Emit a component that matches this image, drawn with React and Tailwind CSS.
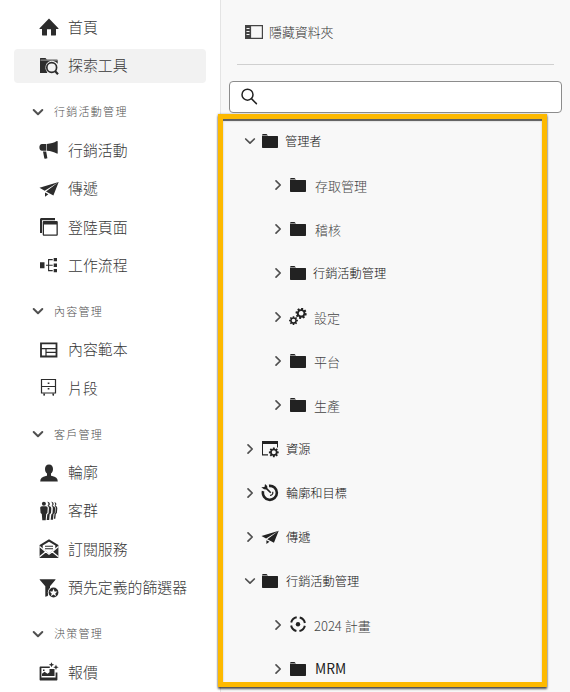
import React from "react";

const Svg = ({ s = 20, children, className = "" }) => (
  <svg width={s} height={s} viewBox={`0 0 ${s} ${s}`} fill="currentColor" className={`shrink-0 ${className}`}>
    {children}
  </svg>
);

const Home = () => (
  <Svg><path d="M10 1.6 19.4 11.2c.3.4.1.8-.3.8H17v6c0 .3-.2.5-.5.5H12V12.3H8v6.2H3.500c-.3 0-.5-.2-.5-.5v-6H.900c-.4 0-.6-.4-.3-.8Z" /></Svg>
);

const Explore = () => (
  <Svg>
    <path d="M1 17V2.500c0-.3.2-.5.500-.5h5l1.300 1.500H18c.4 0 .7.300.7.700v3.600A6.300 6.300 0 0 0 7.500 15l.8 2Z" />
    <path d="M1.500 4.100h17" stroke="#f2f2f2" strokeWidth=".6" />
    <circle cx="12.700" cy="11.500" r="4.900" fill="#f2f2f2" stroke="currentColor" strokeWidth="1.700" />
    <path d="m16 15 3 3.200" stroke="currentColor" strokeWidth="2.200" />
  </Svg>
);

const Megaphone = () => (
  <Svg>
    <path d="M3 4h4.300v6.700H3C1.300 10.700.4 9.300.4 7.300S1.300 4 3 4ZM7.900 4c4-.2 7-1.200 9.900-2.900.4-.3.9 0 .9.400v11.700c0 .4-.5.700-.9.400C15 11.900 12 10.900 7.900 10.700ZM4 11.600h3.200l1.200 6.700-2.300.5c-.5.1-.7-.2-.8-.5Z" />
  </Svg>
);

const Plane = ({ s = 20 }) => (
  <svg width={s} height={s} viewBox="0 0 20 20" fill="currentColor" className="shrink-0">
    <path d="M19.700 3 .5 8.800l5.200 2.900ZM19.700 3 7 12.500l7.400 4ZM6 13.500v4.300l3.400-2.500Z" />
  </svg>
);

const Pages = () => (
  <Svg>
    <path d="M1 16V2.500C1 1.600 1.600 1 2.500 1H16v2.200H3V16Z" />
    <path fillRule="evenodd" d="M5 4h12.500c.8 0 1.300.5 1.300 1.300v12.200c0 .8-.5 1.300-1.300 1.300H5c-.8 0-1.300-.5-1.300-1.300V5.300C3.700 4.500 4.200 4 5 4Zm0 3.500v10h12.500v-10Z" />
  </Svg>
);

const Workflow = () => (
  <Svg>
    <path d="M1 7.200h4.500v6H1ZM14.700 3H18v3.300h-3.300ZM14.700 8.600H18v3.300h-3.300ZM14.700 14H18v3.300h-3.300Z" />
    <path d="M7 10.200h6.700M13.700 4.600H9.600v11h4.100" fill="none" stroke="currentColor" strokeWidth="1.100" />
  </Svg>
);

const Template = () => (
  <Svg>
    <path d="M2 3.300h15.500v13.200H2Z" fill="none" stroke="currentColor" strokeWidth="1.800" />
    <path d="M2 8.700h15.500M7 9v7.500M7.500 12.400h10" fill="none" stroke="currentColor" strokeWidth="1.200" />
  </Svg>
);

const Drawer = () => (
  <Svg>
    <path d="M2.500 1.500h14v13.500h-14ZM2.500 8.500h14" fill="none" stroke="currentColor" strokeWidth="1.200" />
    <path d="M8.700 4.400h1.700v1.700H8.700ZM8.700 9.900h1.700v1.700H8.700ZM4.200 15.500h2l-.5 2.200H4.500ZM13.200 15.500h2l-.3 2.200h-1.200Z" />
  </Svg>
);

const Person = () => (
  <Svg><path d="M10 1.400c2.600 0 4 1.900 4 4.500 0 2-.8 3.700-2 4.700v1.300c0 .7.4 1 1.100 1.200 3.700.8 5.600 2.200 5.700 5.300H1.200c.1-3.100 2-4.500 5.700-5.300.7-.2 1.100-.5 1.100-1.200v-1.300c-1.200-1-2-2.700-2-4.700 0-2.600 1.400-4.500 4-4.500Z" /></Svg>
);

const People = () => (
  <Svg>
    <circle cx="4.900" cy="2.700" r="2" />
    <path d="M3 5.300h3.800c1.100 0 1.900.7 1.900 1.800l-.3 5-1.200.8-.5 6.300H3.300l-.5-6.300-1.200-.8-.4-5c0-1.100.7-1.800 1.800-1.800Z" />
    <path d="M8.200.8c3.200-.2 3.300 3.500 1.100 4.100 2.200.2 3 1.200 3 2.500l-.3 4.800-1.300.9-.5 6H7.700l.6-5.700 1.300-1.100.3-5.300c0-1-.6-1.600-1.500-2 1.500-1.100 1.300-3.100-.2-4.200Z" />
    <path d="M12 .8c3.200-.2 3.300 3.500 1.100 4.100 2.200.2 3 1.200 3 2.500l-.3 4.800-1.300.9-.5 5.700h-2.300l.6-5.400 1.200-1.100.3-5.300c0-1-.5-1.600-1.300-2 1.300-1.100 1.100-3.100-.5-4.200Z" />
    <path d="M15.300 1.200c2.400 0 2.700 2.800.9 3.500 1.500.3 2.100 1.300 2.100 2.500l-.4 4.800-1.100.9-.5 4.900h-1.400l.6-5 .9-1.100.3-4.800c0-.9-.5-1.600-1.200-2 1-1 .9-2.700-.2-3.700Z" />
  </Svg>
);

const MailOpen = () => (
  <Svg>
    <path d="M10 .3 19.400 6v12.200c0 .4-.2.700-.7.700H1.300c-.5 0-.7-.3-.7-.7V6Z" />
    <path d="m10 2.800 6.300 3.700v3.200L10 14.400 3.700 9.700V6.500Z" fill="#fff" />
    <path d="m.6 7.500 6.200 5.200-6.200 5M19.400 7.500l-6.200 5.200 6.200 5M6.800 12.700 10 15.300l3.200-2.600" fill="none" stroke="#fff" strokeWidth="1.200" />
    <path d="M6 7.200h8M6 9.800h8" stroke="currentColor" strokeWidth="1.100" />
  </Svg>
);

const Filter = () => (
  <Svg>
    <path d="M.9 1.300h15.400c.3 0 .4.300.2.500L11 8.300v3L8.700 18l-2.400.8V8.300L.7 1.800c-.2-.2-.1-.5.2-.5Z" />
    <circle cx="14.500" cy="14.500" r="5.700" fill="#fff" />
    <circle cx="14.500" cy="14.500" r="4.900" />
    <path d="m14.500 10.800 1.100 2.600 2.800.2-2.100 1.800.7 2.800-2.500-1.600-2.500 1.600.7-2.800-2.100-1.800 2.800-.2Z" fill="#fff" />
  </Svg>
);

const Offer = () => (
  <Svg>
    <path fillRule="evenodd" d="M1.600 4.500h9.200v1.600H2.400v9.300h14.200v-5h1.800v7c0 .7-.4 1.100-1.100 1.100H1.600c-.7 0-1-.4-1-1.100V5.500c0-.6.400-1 1-1ZM3 11.800l2.500-2 3 2 2-1.600V7h5v7H3Z" />
    <path d="M4 7.500h1.500V9H4Z" />
    <path d="m12.500.2.8 1.800 1.900.7-1.900.7-.8 1.800-.8-1.800-1.900-.7 1.900-.7ZM17 2.500l.7 2 2 .7-2 .8-.7 2-.8-2-2-.8 2-.7Z" />
  </Svg>
);

const Folder = () => (
  <svg width="18" height="17" viewBox="0 0 18 17" fill="currentColor" className="shrink-0">
    <path d="M1 2.500C1 1.600 1.500 1 2.200 1h3.300L7 2.500ZM1 3H16.500c.3 0 .5.200.5.500v10.800c0 .4-.3.700-.7.700H1.700c-.4 0-.7-.3-.7-.7Z" />
  </svg>
);

const cog = "M-1.200-6.500h2.400l.3 2 1 .4 1.600-1.200 1.700 1.700-1.200 1.600.4 1 2 .3v2.400l-2 .3-.4 1 1.200 1.600-1.700 1.700-1.600-1.200-1 .4-.3 2h-2.400l-.3-2-1-.4-1.600 1.200-1.700-1.700 1.200-1.600-.4-1-2-.3v-2.400l2-.3.4-1-1.200-1.600 1.700-1.700 1.600 1.200 1-.4ZM0-2.600a2.900 2.900 0 1 0 0 5.800 2.900 2.900 0 0 0 0-5.800Z";

const Gears = () => (
  <Svg s={18}>
    <g transform="translate(12.200 5) rotate(12) scale(.8)"><path fillRule="evenodd" d={cog} /></g>
    <g transform="translate(4.500 12.300) scale(.63)"><path fillRule="evenodd" d={cog} /></g>
  </Svg>
);

const WindowGear = () => (
  <Svg s={18}>
    <path fillRule="evenodd" d="M1 1h16v6.500h-1V4H2v10.300h5v1.100H1Z" />
    <g transform="translate(12.800 12) scale(.7)"><path fillRule="evenodd" d={cog} /></g>
  </Svg>
);

const Target = () => (
  <Svg s={18}>
    <path d="M8 1.900a7 7 0 1 1-5.900 5.200" fill="none" stroke="currentColor" strokeWidth="2.600" />
    <path d="M11.600 7.700a2.500 2.500 0 0 1-2.500 3.600" fill="none" stroke="currentColor" strokeWidth="1.200" />
    <path d="m4 0 2.200 1.900.2 2.300 3.900 4-1.100 1.100-4-3.900L3 5.300.3 3.300l3.200-.2Z" />
  </Svg>
);

const Plan = () => (
  <Svg s={18}>
    <circle cx="9" cy="8.200" r="7" fill="none" stroke="currentColor" strokeWidth="2" strokeDasharray="7.900 3.096" strokeDashoffset="-1.550" />
    <circle cx="9" cy="8.200" r="2.200" />
  </Svg>
);

const Chevron = ({ open, wide }) => (
  <svg width="12" height="12" viewBox="0 0 12 12" fill="none" stroke="#505050" strokeWidth={wide ? 2 : 1.7} strokeLinecap="round" strokeLinejoin="round" className="shrink-0">
    <path d={open ? "M1.700 4 6 8.200 10.300 4" : "m4 1.800 4.200 4.200L4 10.200"} />
  </svg>
);

const groups = [
  { items: [["首頁", Home], ["探索工具", Explore]] },
  { title: "行銷活動管理", items: [["行銷活動", Megaphone], ["傳遞", Plane], ["登陸頁面", Pages], ["工作流程", Workflow]] },
  { title: "內容管理", items: [["內容範本", Template], ["片段", Drawer]] },
  { title: "客戶管理", items: [["輪廓", Person], ["客群", People], ["訂閱服務", MailOpen], ["預先定義的篩選器", Filter]] },
  { title: "決策管理", items: [["報價", Offer]] },
];

const small = "text-[12.2px] text-[#111]";
const large = "text-[13px] text-[#444]";

const tree = [
  { label: "管理者", Icon: Folder, open: true, cls: small, pad: "ml-[6px]" },
  { label: "存取管理", Icon: Folder, child: true, cls: large, pad: "ml-[8px]" },
  { label: "稽核", Icon: Folder, child: true, cls: large, pad: "ml-[8px]" },
  { label: "行銷活動管理", Icon: Folder, child: true, cls: small, pad: "ml-[6px]" },
  { label: "設定", Icon: Gears, child: true, cls: large, pad: "ml-[7px]" },
  { label: "平台", Icon: Folder, child: true, cls: large, pad: "ml-[7px]" },
  { label: "生產", Icon: Folder, child: true, cls: large, pad: "ml-[7px]" },
  { label: "資源", Icon: WindowGear, cls: small, pad: "ml-[7px]" },
  { label: "輪廓和目標", Icon: Target, cls: small, pad: "ml-[7px]" },
  { label: "傳遞", Icon: Plane, cls: small, pad: "ml-[7px]" },
  { label: "行銷活動管理", Icon: Folder, open: true, cls: small, pad: "ml-[7px]" },
  { label: "2024 計畫", Icon: Plan, child: true, cls: large, pad: "ml-[7px]" },
  { label: "MRM", Icon: Folder, child: true, cls: "text-[13.8px] font-normal text-[#222]", pad: "ml-[8px]" },
];

export default function App() {
  return (
    <div className="relative flex h-[692px] w-[570px] overflow-hidden bg-white font-['Noto_Sans_CJK_TC','Noto_Sans',sans-serif] font-light">
      <nav className="w-[220px] shrink-0 pt-[10.400px] pl-[13.500px] text-[#2c2c2c]">
        {groups.map((g, i) => (
          <section key={i}>
            {g.title && (
              <div className="flex h-[46px] items-center gap-[10px] pt-[3px] pl-[18.500px]">
                <Chevron open wide />
                <span className="text-[11px] leading-none tracking-[1.280px] text-[#505050]">{g.title}</span>
              </div>
            )}
            {g.items.map(([label, Icon]) => (
              <div key={label} className={`mb-[4.400px] flex h-[34px] w-[192.500px] items-center gap-[9px] rounded pl-[25.500px] ${label === "探索工具" ? "bg-[#f2f2f2]" : ""}`}>
                <Icon />
                <span className="text-[14.900px] leading-none whitespace-nowrap text-[#383838]">{label}</span>
              </div>
            ))}
          </section>
        ))}
      </nav>
      <main className="flex flex-1 flex-col border-l border-[#e4e4e4] bg-[#f8f8f8]">
        <div className="mr-[16px] ml-[16px] flex h-[65px] items-center gap-[6px] border-b border-[#d0d0d0] pl-[8px] text-[#444]">
          <svg width="18" height="14" viewBox="0 0 18 14" fill="none" stroke="currentColor" strokeWidth="1.200" className="shrink-0">
            <path d="M.6.6h16.800v12.800H.6Z" />
            <path d="M.5.5h5v13h-5Z" fill="currentColor" />
            <path d="M1.500 3.500h3M1.500 6.500h3M1.500 9.500h3" stroke="#f8f8f8" />
          </svg>
          <span className="text-[12.900px] leading-none text-[#333]">隱藏資料夾</span>
        </div>
        <div className="mt-[16px] mr-[8px] ml-[8px] flex h-[32px] items-center rounded border border-[#8c8c8c] bg-white pl-[11px]">
          <svg width="18" height="18" viewBox="0 0 18 18" fill="none" stroke="#222" strokeWidth="1.500" strokeLinecap="round">
            <circle cx="6.500" cy="6.700" r="5.500" />
            <path d="m10.700 10.900 4.700 4.700" />
          </svg>
        </div>
        <div className="mt-[6px]">
          {tree.map(({ label, Icon, child, open, cls, pad }, i) => (
            <div key={i} className={`flex h-[44px] items-center ${child ? "pl-[51px]" : "pl-[23px]"}`}>
              <Chevron open={open} />
              <div className="ml-[5px] flex w-[18px] justify-center text-[#222]">
                <Icon s={18} />
              </div>
              <span className={`leading-none whitespace-nowrap ${cls} ${pad}`}>{label}</span>
            </div>
          ))}
        </div>
      </main>
      <div className="pointer-events-none absolute top-[114px] left-[218px] h-[573px] w-[329px] border-5 border-[#fdb900] shadow-[0_2px_2px_rgba(0,0,0,0.65),0_0_2px_rgba(0,0,0,0.3),inset_0_2px_0_rgba(0,0,0,0.5),inset_0_2px_2px_rgba(0,0,0,0.25)]" />
    </div>
  );
}
